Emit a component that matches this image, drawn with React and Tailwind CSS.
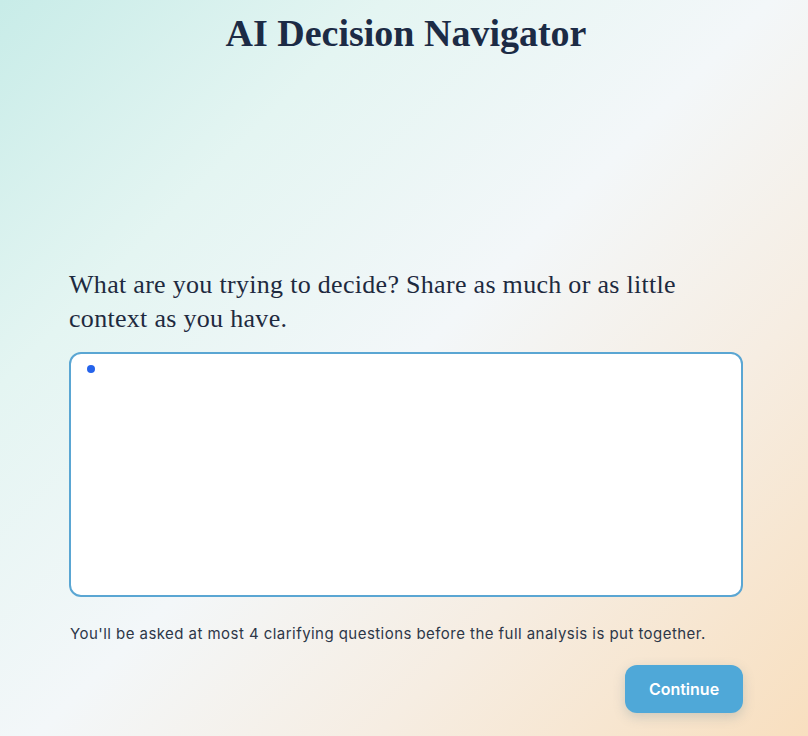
export default function App() {
  return (
    <div
      className="min-h-[736px] w-full bg-[linear-gradient(135deg,#c8ece8_0%,#e4f5f2_25%,#f3f7f9_50%,#f6ede2_72%,#f8dfbf_100%)] text-[#1e2a3f]"
      style={{ fontFamily: 'Inter, "Liberation Sans", sans-serif' }}
    >
      <div className="ml-[69px] flex w-[674px] flex-col pt-[10px]">
        <h1 className="text-center font-['Liberation_Serif',serif] text-[38px] font-bold leading-[46px] text-[#1c2b45]">
          AI Decision Navigator
        </h1>

        <div className="mt-[212px]">
          <label className="block font-['Liberation_Serif',serif] text-[26px] leading-[34px] tracking-[0.3px] text-[#1e2a3f]">
            What are you trying to decide? Share as much or as little context as you have.
          </label>

          <div className="relative mt-[16px]">
            <textarea
              className="block h-[245px] w-full resize-none rounded-[12px] border-2 border-[#5aa6d3] bg-white px-4 py-3 text-[15px] outline-none"
              defaultValue=""
            />
            <span className="absolute left-[18px] top-[13px] h-[8px] w-[8px] rounded-full bg-[#2563eb]" />
          </div>

          <p className="mt-[27px] pl-[1px] text-[15px] leading-[20px] tracking-[0.45px] text-[#2d3748]">
            You'll be asked at most 4 clarifying questions before the full analysis is put together.
          </p>

          <div className="mt-[21px] flex justify-end">
            <button className="h-[48px] w-[118px] rounded-[12px] bg-[#4fa8d8] text-[16px] font-semibold text-white shadow-[0_4px_12px_rgba(80,120,140,0.25)]">
              Continue
            </button>
          </div>
        </div>
      </div>
    </div>
  );
}
